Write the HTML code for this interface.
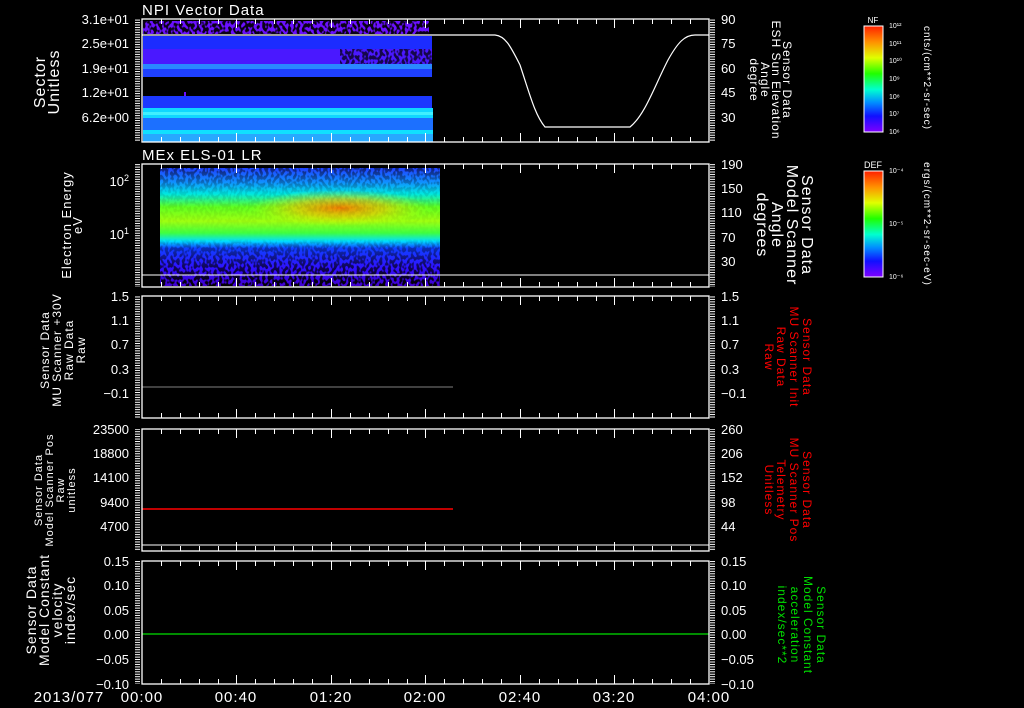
<!DOCTYPE html>
<html><head><meta charset="utf-8"><style>
html,body{margin:0;padding:0;background:#000;width:1024px;height:708px;overflow:hidden}
svg{display:block}
text{font-family:"Liberation Sans",sans-serif;fill:#fff}
.r text{fill:#ff0000}
.g text{fill:#00e000}
.ls text{letter-spacing:1px}
</style></head><body>
<svg width="1024" height="708" viewBox="0 0 1024 708" xmlns="http://www.w3.org/2000/svg">
<defs>
<pattern id="ytl" x="0" y="0" width="10" height="2.45" patternUnits="userSpaceOnUse"><rect x="5" y="0" width="5" height="1" fill="#fff"/></pattern>
<pattern id="ytr" x="0" y="0" width="10" height="2.45" patternUnits="userSpaceOnUse"><rect x="0" y="0" width="5" height="1" fill="#fff"/></pattern>
<linearGradient id="rb" x1="0" y1="0" x2="0" y2="1">
<stop offset="0" stop-color="#ff2000"/><stop offset="0.15" stop-color="#ff9000"/><stop offset="0.3" stop-color="#e0ff00"/><stop offset="0.45" stop-color="#20ff00"/><stop offset="0.6" stop-color="#00ffd0"/><stop offset="0.72" stop-color="#0090ff"/><stop offset="0.85" stop-color="#1010ff"/><stop offset="1" stop-color="#8000ff"/></linearGradient>
<linearGradient id="sp" x1="0" y1="0" x2="0" y2="1">
<stop offset="0" stop-color="#2040ff"/><stop offset="0.12" stop-color="#1090ff"/><stop offset="0.22" stop-color="#00e8e0"/><stop offset="0.33" stop-color="#60ff20"/><stop offset="0.45" stop-color="#a0ff10"/><stop offset="0.55" stop-color="#40ff40"/><stop offset="0.62" stop-color="#00e0ff"/><stop offset="0.68" stop-color="#1040ff"/><stop offset="0.85" stop-color="#3010ff"/><stop offset="1" stop-color="#4000d0"/></linearGradient>
<radialGradient id="hot" cx="0.5" cy="0.5" r="0.5"><stop offset="0" stop-color="#ff7000" stop-opacity="0.9"/><stop offset="0.5" stop-color="#ffc000" stop-opacity="0.6"/><stop offset="1" stop-color="#e0ff00" stop-opacity="0"/></radialGradient>
<filter id="nz" x="0" y="0" width="100%" height="100%"><feTurbulence type="fractalNoise" baseFrequency="0.35 0.25" numOctaves="1" seed="3"/><feColorMatrix type="matrix" values="0 0 0 0 0  0 0 0 0 0  0 0 0 0 0  0 0 0 -9 5"/></filter>
<linearGradient id="fade" x1="0" y1="0" x2="0" y2="1"><stop offset="0" stop-color="#fff" stop-opacity="0.5"/><stop offset="0.2" stop-color="#fff" stop-opacity="0.1"/><stop offset="0.6" stop-color="#fff" stop-opacity="0"/><stop offset="0.68" stop-color="#fff" stop-opacity="0.3"/><stop offset="1" stop-color="#fff" stop-opacity="1"/></linearGradient>
<mask id="fm"><rect x="160" y="168" width="280" height="118" fill="url(#fade)"/></mask>
<g id="tt">
<rect x="161" y="0" width="1" height="5"/><rect x="180" y="0" width="1" height="5"/><rect x="199" y="0" width="1" height="5"/><rect x="218" y="0" width="1" height="5"/><rect x="236" y="0" width="1" height="9"/><rect x="255" y="0" width="1" height="5"/><rect x="274" y="0" width="1" height="5"/><rect x="293" y="0" width="1" height="5"/><rect x="312" y="0" width="1" height="5"/><rect x="331" y="0" width="1" height="9"/><rect x="350" y="0" width="1" height="5"/><rect x="369" y="0" width="1" height="5"/><rect x="388" y="0" width="1" height="5"/><rect x="407" y="0" width="1" height="5"/><rect x="425" y="0" width="1" height="9"/><rect x="444" y="0" width="1" height="5"/><rect x="463" y="0" width="1" height="5"/><rect x="482" y="0" width="1" height="5"/><rect x="501" y="0" width="1" height="5"/><rect x="520" y="0" width="1" height="9"/><rect x="539" y="0" width="1" height="5"/><rect x="558" y="0" width="1" height="5"/><rect x="577" y="0" width="1" height="5"/><rect x="596" y="0" width="1" height="5"/><rect x="614" y="0" width="1" height="9"/><rect x="633" y="0" width="1" height="5"/><rect x="652" y="0" width="1" height="5"/><rect x="671" y="0" width="1" height="5"/><rect x="690" y="0" width="1" height="5"/>
</g>
</defs>

<!-- Panel 1 data -->
<rect x="143" y="21" width="286" height="13" fill="#6a10ff"/>
<rect x="143" y="21" width="286" height="13" fill="#000" filter="url(#nz)" opacity="0.9"/>
<rect x="143" y="36" width="289" height="13" fill="#1c2cff"/>
<rect x="143" y="49" width="289" height="15" fill="#4a18ff"/>
<rect x="340" y="49" width="92" height="15" fill="#000" filter="url(#nz)" opacity="0.7"/>
<rect x="143" y="64" width="289" height="5" fill="#2a88ff"/>
<rect x="143" y="69" width="289" height="8" fill="#1e40ff"/>
<rect x="143" y="96" width="289" height="12" fill="#1c38ff"/>
<rect x="143" y="108" width="290" height="10" fill="#10d8ff"/>
<rect x="143" y="112" width="290" height="3" fill="#40f0ff"/>
<rect x="143" y="118" width="290" height="12" fill="#1c70ff"/>
<rect x="143" y="130" width="290" height="4" fill="#10e0ff"/>
<rect x="143" y="134" width="290" height="8" fill="#28a8ff"/>
<rect x="184" y="92" width="2" height="4" fill="#6a10ff"/>
<path d="M142,35 L495,35 C505,36 510,45 520,65 C530,95 535,115 545,127 L630,127 C645,115 655,85 668,60 C678,42 685,35 695,35 L709,35" fill="none" stroke="#fff" stroke-width="1.2"/>

<!-- Panel 2 data -->
<rect x="160" y="168" width="280" height="118" fill="url(#sp)"/>
<ellipse cx="340" cy="208" rx="90" ry="18" fill="url(#hot)"/>
<rect x="160" y="168" width="280" height="118" fill="#000" filter="url(#nz)" mask="url(#fm)"/>
<line x1="142" y1="275" x2="709" y2="275" stroke="#fff"/>

<!-- lines -->
<line x1="142" y1="387" x2="453" y2="387" stroke="#808080"/>
<line x1="142" y1="509" x2="453" y2="509" stroke="#ff0000" stroke-width="1.5"/>
<line x1="142" y1="634" x2="709" y2="634" stroke="#00e000" stroke-width="1.2"/>
<line x1="142" y1="545" x2="709" y2="545" stroke="#fff"/>

<!-- Frames and ticks -->
<g fill="none" stroke="#fff" stroke-width="1.3">
<rect x="142" y="19" width="567" height="123"/>
<rect x="142" y="164" width="567" height="123"/>
<rect x="142" y="296" width="567" height="122"/>
<rect x="142" y="429" width="567" height="122"/>
<rect x="142" y="561" width="567" height="123"/>
</g>
<g>
<rect x="132" y="19" width="10" height="123" fill="url(#ytl)"/>
<rect x="709" y="19" width="10" height="123" fill="url(#ytr)"/>
<rect x="132" y="164" width="10" height="123" fill="url(#ytl)"/>
<rect x="709" y="164" width="10" height="123" fill="url(#ytr)"/>
<rect x="132" y="296" width="10" height="122" fill="url(#ytl)"/>
<rect x="709" y="296" width="10" height="122" fill="url(#ytr)"/>
<rect x="132" y="429" width="10" height="122" fill="url(#ytl)"/>
<rect x="709" y="429" width="10" height="122" fill="url(#ytr)"/>
<rect x="132" y="561" width="10" height="123" fill="url(#ytl)"/>
<rect x="709" y="561" width="10" height="123" fill="url(#ytr)"/>
</g>
<g fill="#fff">
<use href="#tt" y="19"/><use href="#tt" y="164"/><use href="#tt" y="296"/><use href="#tt" y="429"/><use href="#tt" y="561"/>
<use href="#tt" transform="translate(0,142) scale(1,-1)"/>
<use href="#tt" transform="translate(0,287) scale(1,-1)"/>
<use href="#tt" transform="translate(0,418) scale(1,-1)"/>
<use href="#tt" transform="translate(0,551) scale(1,-1)"/>
<use href="#tt" transform="translate(0,684) scale(1,-1)"/>
</g>

<!-- Titles -->
<g class="ls"><text x="142" y="15" font-size="15">NPI Vector Data</text>
<text x="142" y="160" font-size="15">MEx ELS-01 LR</text></g>

<!-- Left tick labels -->
<g font-size="13" text-anchor="end">
<text x="129" y="24">3.1e+01</text><text x="129" y="48">2.5e+01</text><text x="129" y="73">1.9e+01</text><text x="129" y="97">1.2e+01</text><text x="129" y="122">6.2e+00</text>
<text x="129" y="186">10<tspan font-size="9" dy="-5">2</tspan></text><text x="129" y="239">10<tspan font-size="9" dy="-5">1</tspan></text>
<text x="129" y="301">1.5</text><text x="129" y="325">1.1</text><text x="129" y="349">0.7</text><text x="129" y="374">0.3</text><text x="129" y="398">−0.1</text>
<text x="129" y="434">23500</text><text x="129" y="458">18800</text><text x="129" y="482">14100</text><text x="129" y="507">9400</text><text x="129" y="531">4700</text>
<text x="129" y="566">0.15</text><text x="129" y="590">0.10</text><text x="129" y="615">0.05</text><text x="129" y="639">0.00</text><text x="129" y="664">−0.05</text><text x="129" y="689">−0.10</text>
</g>
<!-- Right tick labels -->
<g font-size="13">
<text x="721" y="24">90</text><text x="721" y="48">75</text><text x="721" y="73">60</text><text x="721" y="97">45</text><text x="721" y="122">30</text>
<text x="721" y="169">190</text><text x="721" y="193">150</text><text x="721" y="217">110</text><text x="721" y="242">70</text><text x="721" y="266">30</text>
<text x="721" y="301">1.5</text><text x="721" y="325">1.1</text><text x="721" y="349">0.7</text><text x="721" y="374">0.3</text><text x="721" y="398">−0.1</text>
<text x="721" y="434">260</text><text x="721" y="458">206</text><text x="721" y="482">152</text><text x="721" y="507">98</text><text x="721" y="531">44</text>
<text x="721" y="566">0.15</text><text x="721" y="590">0.10</text><text x="721" y="615">0.05</text><text x="721" y="639">0.00</text><text x="721" y="664">−0.05</text><text x="721" y="689">−0.10</text>
</g>
<!-- time axis -->
<g font-size="15" text-anchor="middle" class="ls">
<text x="69" y="702">2013/077</text><text x="142" y="702">00:00</text><text x="236" y="702">00:40</text><text x="331" y="702">01:20</text><text x="425" y="702">02:00</text><text x="520" y="702">02:40</text><text x="614" y="702">03:20</text><text x="709" y="702">04:00</text>
</g>

<!-- Left axis titles -->
<g text-anchor="middle" class="ls">
<g transform="translate(45,82) rotate(-90)" font-size="16"><text x="0" y="0">Sector</text><text x="0" y="14">Unitless</text></g>
<g transform="translate(71,225) rotate(-90)" font-size="13"><text x="0" y="0">Electron Energy</text><text x="0" y="11">eV</text></g>
<g transform="translate(49,350) rotate(-90)" font-size="12"><text x="0" y="0">Sensor Data</text><text x="0" y="12">MU Scanner +30V</text><text x="0" y="24">Raw Data</text><text x="0" y="36">Raw</text></g>
<g transform="translate(42,490) rotate(-90)" font-size="11"><text x="0" y="0">Sensor Data</text><text x="0" y="11">Model Scanner Pos</text><text x="0" y="22">Raw</text><text x="0" y="33">unitless</text></g>
<g transform="translate(36,610) rotate(-90)" font-size="14"><text x="0" y="0">Sensor Data</text><text x="0" y="13">Model Constant</text><text x="0" y="26">velocity</text><text x="0" y="39">index/sec</text></g>
</g>
<!-- Right axis titles -->
<g text-anchor="middle" class="ls">
<g transform="translate(783,80) rotate(90)" font-size="12"><text x="0" y="0">Sensor Data</text><text x="0" y="11">ESH Sun Elevation</text><text x="0" y="22">Angle</text><text x="0" y="33">degree</text></g>
<g transform="translate(802,225) rotate(90)" font-size="16"><text x="0" y="0">Sensor Data</text><text x="0" y="15">Model Scanner</text><text x="0" y="30">Angle</text><text x="0" y="45">degrees</text></g>
<g transform="translate(803,357) rotate(90)" font-size="12" class="r"><text x="0" y="0">Sensor Data</text><text x="0" y="13">MU Scanner Init</text><text x="0" y="26">Raw Data</text><text x="0" y="38">Raw</text></g>
<g transform="translate(803,490) rotate(90)" font-size="12" class="r"><text x="0" y="0">Sensor Data</text><text x="0" y="13">MU Scanner Pos</text><text x="0" y="26">Telemetry</text><text x="0" y="38">Unitless</text></g>
<g transform="translate(817,625) rotate(90)" font-size="12" class="g"><text x="0" y="0">Sensor Data</text><text x="0" y="13">Model Constant</text><text x="0" y="26">acceleration</text><text x="0" y="39">index/sec**2</text></g>
</g>

<!-- Colorbars -->
<rect x="864" y="26" width="19" height="106" fill="url(#rb)" stroke="#fff" stroke-width="1"/>
<rect x="864" y="171" width="19" height="106" fill="url(#rb)" stroke="#fff" stroke-width="1"/>
<text x="873" y="23" font-size="8" text-anchor="middle">NF</text>
<text x="873" y="168" font-size="9" text-anchor="middle">DEF</text>
<g font-size="7">
<text x="889" y="28">10¹²</text><text x="889" y="46">10¹¹</text><text x="889" y="63">10¹⁰</text><text x="889" y="81">10⁹</text><text x="889" y="99">10⁸</text><text x="889" y="116">10⁷</text><text x="889" y="134">10⁶</text>
<text x="889" y="173">10⁻⁴</text><text x="889" y="226">10⁻⁵</text><text x="889" y="279">10⁻⁶</text>
</g>
<g font-size="10" text-anchor="middle" class="ls">
<g transform="translate(924,78) rotate(90)"><text x="0" y="0">cnts/(cm**2-sr-sec)</text></g>
<g transform="translate(924,224) rotate(90)"><text x="0" y="0">ergs/(cm**2-sr-sec-eV)</text></g>
</g>
</svg>
</body></html>
